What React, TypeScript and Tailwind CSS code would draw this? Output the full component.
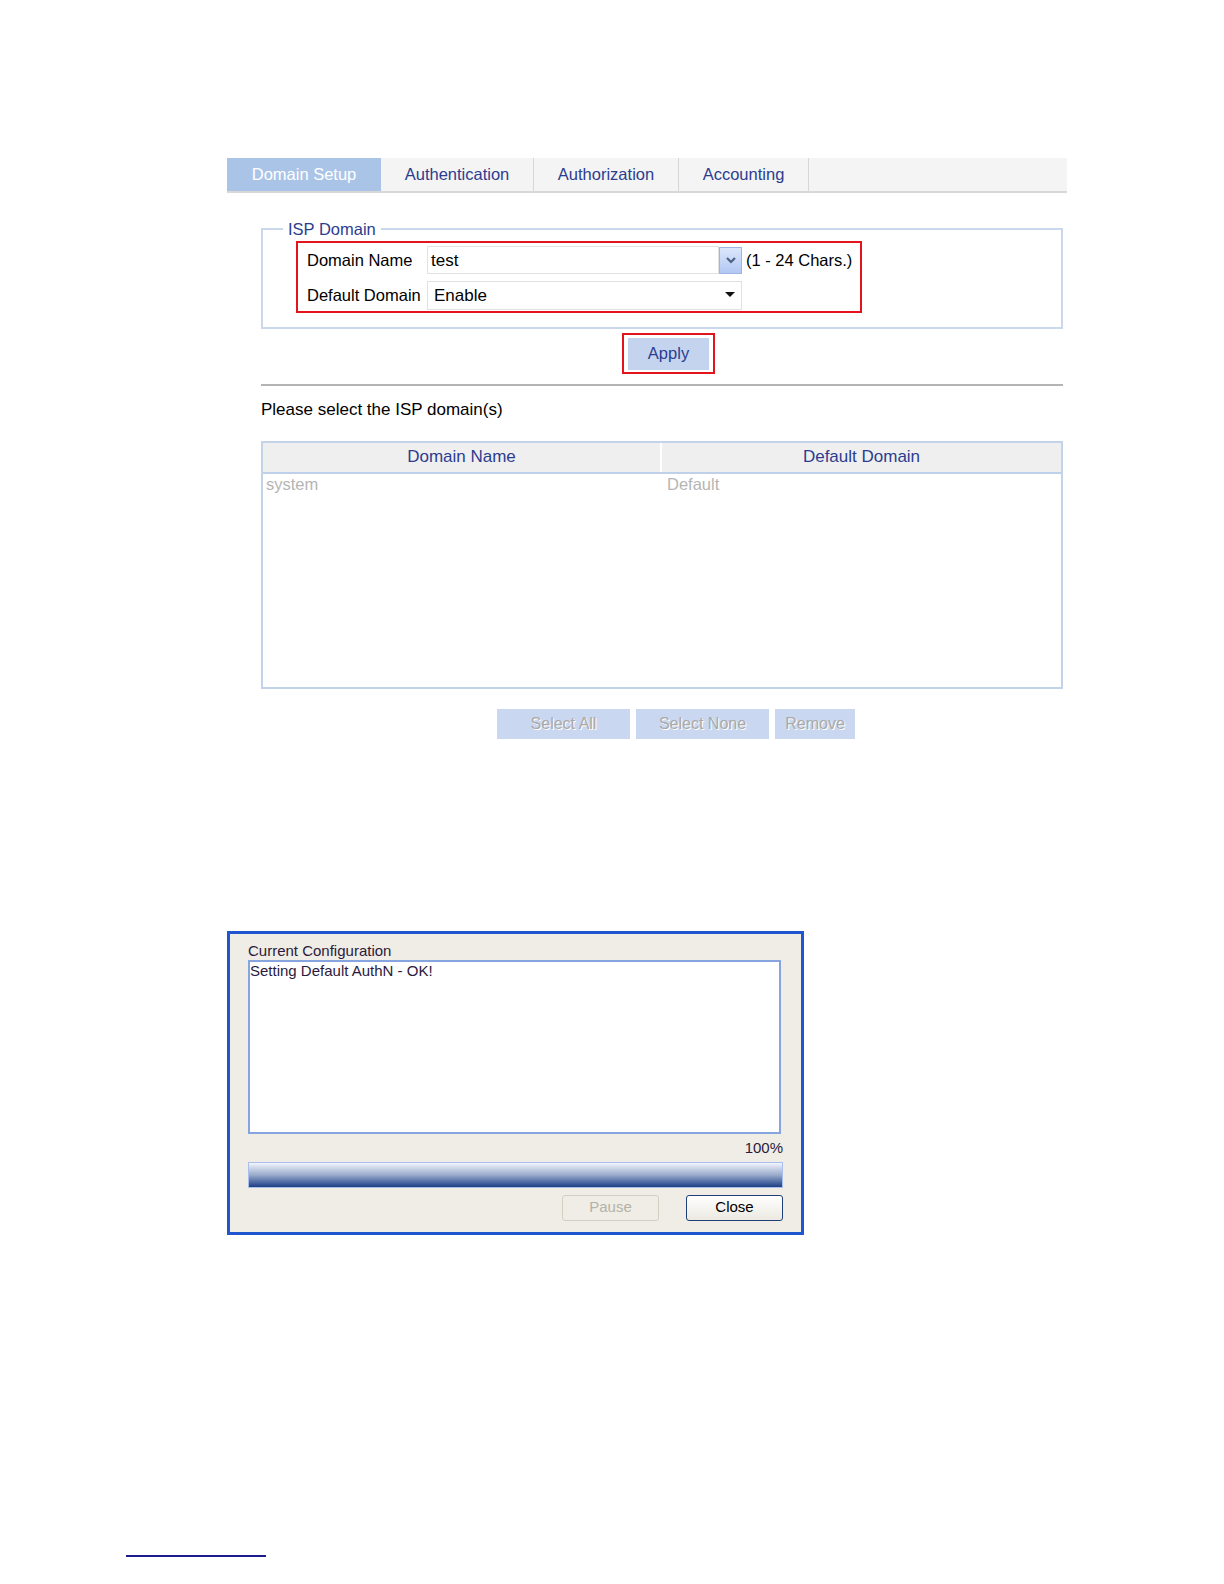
import React from "react";

const tabs = ["Domain Setup", "Authentication", "Authorization", "Accounting"];
const tabWidths = ["w-[154px]", "w-[153px]", "w-[145px]", "w-[130px]"];

function DomainForm() {
  return (
    <div className="flex flex-col">
      {/* Tab strip */}
      <div className="flex h-[35px] border-b-2 border-[#d8d8d8] bg-[#f4f4f4]">
        {tabs.map((t, i) => (
          <div
            key={t}
            className={`${tabWidths[i]} flex items-center justify-center text-[16.5px] ${
              i === 0 ? "bg-[#aac4e8] text-white" : "border-r border-[#d6d6d6] text-[#2c3d8f]"
            }`}
          >
            {t}
          </div>
        ))}
      </div>

      {/* ISP Domain fieldset */}
      <fieldset className="ml-[34px] mt-[24px] w-[802px] h-[112px] border-2 border-[#c9d8ea] p-0">
        <legend className="ml-[20px] px-[5px] text-[16.5px] text-[#2c3d8f]">ISP Domain</legend>
        <div className="ml-[33px] mt-[-1px] w-[566px] h-[72px] border-2 border-[#e3141b] pl-[9px] pt-[3px] flex flex-col gap-[6px]">
          <div className="flex items-center h-[29px]">
            <span className="w-[120px] text-[16.5px] text-black">Domain Name</span>
            <div className="w-[292px] h-[28px] border border-[#e2e2e2] flex items-center pl-[3px] text-[17px]">test</div>
            <div className="w-[23px] h-[27px] border border-[#9db6e4] bg-gradient-to-b from-[#dce7fb] to-[#b2c7f3] flex items-center justify-center">
              <svg width="12" height="9" viewBox="0 0 12 9">
                <path d="M2 2 L6 6 L10 2" stroke="#4d6185" strokeWidth="2.2" fill="none" />
              </svg>
            </div>
            <span className="ml-[4px] text-[16.5px] text-black">(1 - 24 Chars.)</span>
          </div>
          <div className="flex items-center h-[29px]">
            <span className="w-[120px] text-[16.5px] text-black">Default Domain</span>
            <div className="w-[315px] h-[29px] border border-[#e2e2e2] flex items-center justify-between pl-[6px] pr-[6px] text-[17px]">
              <span>Enable</span>
              <svg width="10" height="6" viewBox="0 0 10 6">
                <path d="M0 0 L10 0 L5 5 Z" fill="#111" />
              </svg>
            </div>
          </div>
        </div>
      </fieldset>

      {/* Apply */}
      <div className="ml-[395px] mt-[4px] w-[93px] h-[41px] border-2 border-[#e3141b] flex items-center justify-center">
        <div className="w-[81px] h-[32px] bg-[#c4d4ef] flex items-center justify-center text-[16.5px] text-[#2c3d8f]">Apply</div>
      </div>

      <div className="ml-[34px] mt-[10px] w-[802px] h-[2px] bg-[#b4b4b4]" />

      <p className="ml-[34px] mt-[11px] text-[17px] text-black">Please select the ISP domain(s)</p>

      {/* Domain list */}
      <div className="ml-[34px] mt-[18px] w-[802px] h-[248px] border-2 border-[#c3d4ea] flex flex-col">
        <div className="flex h-[31px] bg-[#efefef] border-b-2 border-[#bed0ea]">
          <div className="w-[399px] border-r-2 border-white flex items-center justify-center text-[17px] text-[#2c3d8f]">
            Domain Name
          </div>
          <div className="flex-1 flex items-center justify-center text-[17px] text-[#2c3d8f]">
            Default Domain
          </div>
        </div>
        <div className="flex h-[22px] items-center text-[16.5px] text-[#b5b5b5]">
          <span className="w-[401px] pl-[3px]">system</span>
          <span className="pl-[3px]">Default</span>
        </div>
      </div>

      <div className="ml-[270px] mt-[20px] flex gap-[6px]">
        {[
          ["Select All", "w-[133px]"],
          ["Select None", "w-[133px]"],
          ["Remove", "w-[80px]"],
        ].map(([label, w]) => (
          <div
            key={label}
            className={`${w} h-[30px] bg-[#c9d8f0] flex items-center justify-center text-[16px] text-[#a9a9a9] [text-shadow:1px_1px_0_#fff]`}
          >
            {label}
          </div>
        ))}
      </div>
    </div>
  );
}

function ConfigDialog() {
  return (
    <div className="w-[577px] h-[304px] border-[3px] border-[#1f55cf] bg-[#efede5] pl-[18px] pr-[18px] pt-[8px] flex flex-col text-[15px] text-[#2b1a3d]">
      <span className="leading-[18px]">Current Configuration</span>
      <div className="w-[533px] h-[174px] border-2 border-[#86a4de] bg-white leading-[18px]">Setting Default AuthN - OK!</div>
      <span className="w-[535px] mt-[5px] text-right leading-[18px]">100%</span>
      <div className="w-[535px] h-[26px] mt-[5px] border border-[#a9c0ee] bg-gradient-to-b from-[#f2f5fc] via-[#9aabcc] to-[#1d3e85]" />
      <div className="w-[535px] mt-[7px] flex justify-end gap-[27px]">
        <div className="w-[97px] h-[26px] rounded-[3px] border border-[#d3d0c3] flex items-center justify-center text-[#b4b2a8]">Pause</div>
        <div className="w-[97px] h-[26px] rounded-[3px] border border-[#1f3f7a] bg-gradient-to-b from-white to-[#ebe9e1] flex items-center justify-center text-black">
          Close
        </div>
      </div>
    </div>
  );
}

export default function App() {
  return (
    <div className="w-full h-[1584px] overflow-hidden bg-white font-['Liberation_Sans',Arial,sans-serif] flex flex-col">
      <div className="ml-[227px] mt-[158px] w-[840px]">
        <DomainForm />
      </div>
      <div className="ml-[227px] mt-[192px]">
        <ConfigDialog />
      </div>
      <div className="ml-[126px] mt-[320px] w-[140px] h-[2px] bg-[#1b1b8f]" />
    </div>
  );
}
